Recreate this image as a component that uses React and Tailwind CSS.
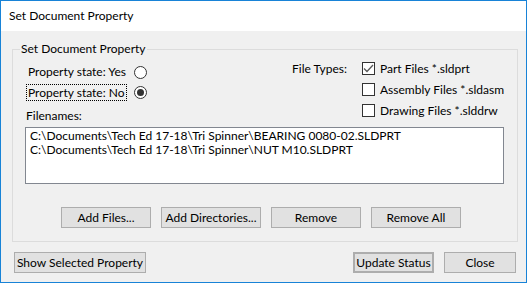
import React from "react";

const files = [
  "C:\\Documents\\Tech Ed 17-18\\Tri Spinner\\BEARING 0080-02.SLDPRT",
  "C:\\Documents\\Tech Ed 17-18\\Tri Spinner\\NUT M10.SLDPRT",
];

const fileTypes = [
  { label: "Part Files *.sldprt", checked: true },
  { label: "Assembly Files *.sldasm", checked: false },
  { label: "Drawing Files *.slddrw", checked: false },
];

function Radio({ on }) {
  return (
    <span className="flex h-[13px] w-[13px] shrink-0 items-center justify-center rounded-full border border-[#333333] bg-white">
      {on && <span className="h-[7px] w-[7px] rounded-full bg-[#333333]" />}
    </span>
  );
}

function Check({ on }) {
  return (
    <span className="flex h-[13px] w-[13px] shrink-0 items-center justify-center border border-[#333333] bg-white">
      {on && (
        <svg width="11" height="11" viewBox="0 0 11 11">
          <polyline points="1,5.5 4,8.5 10,2" fill="none" stroke="#5a5a5a" strokeWidth="1.3" />
        </svg>
      )}
    </span>
  );
}

function Btn({ children, className = "" }) {
  return (
    <button className={`flex h-[21px] items-center justify-center whitespace-nowrap border border-[#adadad] bg-[#e1e1e1] text-[12px] leading-none ${className}`}>
      {children}
    </button>
  );
}

export default function App() {
  return (
    <div className="flex h-[283px] w-[527px] flex-col whitespace-nowrap border border-[#1883d7] font-['Lato',sans-serif] text-[12px] leading-[16px] text-black">
      <div className="flex h-[30px] shrink-0 items-center bg-white pl-[8px]">Set Document Property</div>

      <div className="flex flex-1 flex-col bg-[#f0f0f0] pl-[11px]">
        {/* group box */}
        <div className="relative mt-[18px] w-[506px] border border-[#dcdcdc] pb-[13px] pl-[12px] pt-[8px]">
          <span className="absolute left-[7px] top-[-9px] bg-[#f0f0f0] px-[1px]">Set Document Property</span>

          <div className="flex">
            <div className="flex w-[267px] flex-col pt-[4px]">
              <div className="flex h-[20px] items-center pl-[2px]">
                <div className="w-[107px]">
                  <span className="px-[1px]">Property state: Yes</span>
                </div>
                <Radio on={false} />
              </div>
              <div className="flex h-[21px] items-center pl-[2px]">
                <div className="w-[107px]">
                  <span className="outline-1 outline-dotted outline-black px-[1px]">Property state: No</span>
                </div>
                <Radio on />
              </div>
              <div className="mt-[5px] pl-[1px]">Filenames:</div>
            </div>

            <div className="flex">
              <div className="flex h-[21px] w-[70px] items-center">File Types:</div>
              <div className="flex flex-col">
                {fileTypes.map((t) => (
                  <div key={t.label} className="flex h-[21px] items-center gap-[5px]">
                    <Check on={t.checked} />
                    <span>{t.label}</span>
                  </div>
                ))}
              </div>
            </div>
          </div>

          <div className="mt-[3px] h-[57px] w-[479px] border border-[#828790] bg-white pl-[4px] pt-[1px] leading-[14px]">
            {files.map((f) => (
              <div key={f}>{f}</div>
            ))}
          </div>

          <div className="mt-[23px] flex gap-[10px] pl-[36px]">
            <Btn className="w-[90px]">Add Files...</Btn>
            <Btn className="w-[100px]">Add Directories...</Btn>
            <Btn className="w-[90px]">Remove</Btn>
            <Btn className="w-[90px]">Remove All</Btn>
          </div>
        </div>

        {/* bottom row */}
        <div className="mt-[10px] flex gap-[10px] pl-[2px] pr-[10px]">
          <Btn className="w-[132px]">Show Selected Property</Btn>
          <Btn className="ml-auto w-[81px] border-2 border-[#0078d7]">Update Status</Btn>
          <Btn className="w-[72px]">Close</Btn>
        </div>
      </div>
    </div>
  );
}
